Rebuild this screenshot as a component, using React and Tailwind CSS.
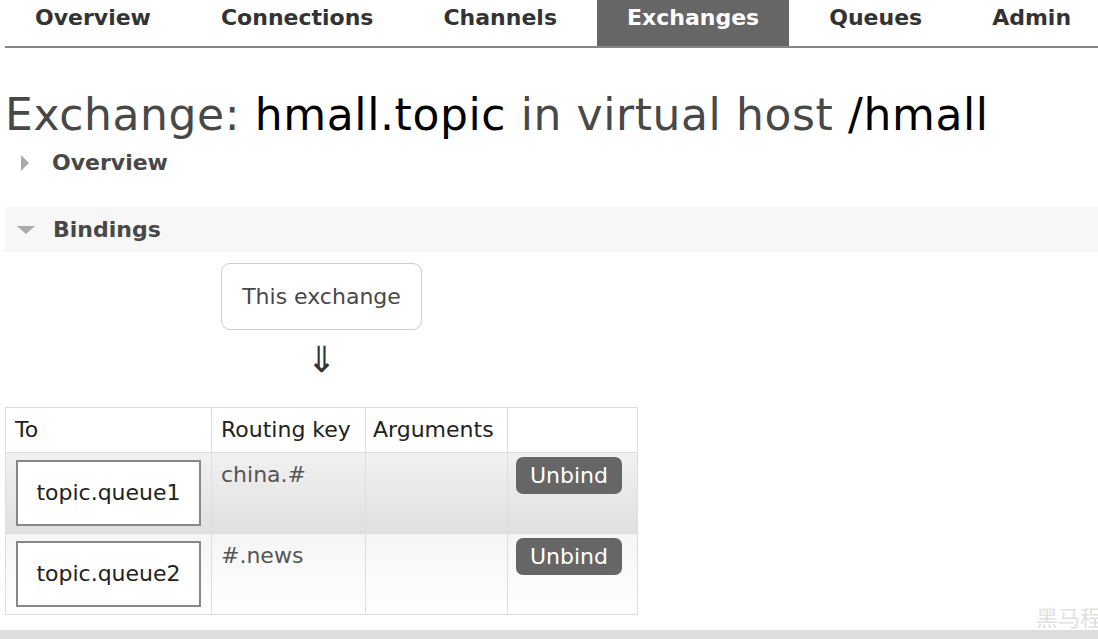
import React from "react";

const FONT = { fontFamily: '"DejaVu Sans", Verdana, "Noto Sans CJK SC", sans-serif' };

const tabs = ["Overview", "Connections", "Channels", "Exchanges", "Queues", "Admin"];

const bindings = [
  { to: "topic.queue1", key: "china.#", odd: true },
  { to: "topic.queue2", key: "#.news", odd: false },
];

function NavBar() {
  return (
    <div className="ml-[5px] flex h-[48px] gap-[10px] border-b-2 border-[#888]">
      {tabs.map((t) => (
        <div
          key={t}
          className={
            t === "Exchanges"
              ? "bg-[#666] px-[30px] pt-[5px] text-[22px] leading-[26px] font-bold text-white"
              : "px-[30px] pt-[5px] text-[22px] leading-[26px] font-bold text-[#333]"
          }
        >
          {t}
        </div>
      ))}
    </div>
  );
}

function Caret({ open }) {
  return open ? (
    <svg width="20" height="10" viewBox="0 0 20 10" className="mr-[17px]">
      <polygon points="1,1 19,1 10,9" fill="#aaa" />
    </svg>
  ) : (
    <svg width="10" height="18" viewBox="0 0 10 18" className="mr-[22px]">
      <polygon points="1,1 9,9 1,17" fill="#aaa" />
    </svg>
  );
}

export default function App() {
  return (
    <div className="relative h-[639px] w-[1098px] overflow-hidden bg-white" style={FONT}>
      <NavBar />

      <h1 className="ml-[5px] mt-[41px] text-[44px] leading-[52px] tracking-[0.6px] text-[#484848]">
        Exchange: <span className="text-black">hmall.topic</span> in virtual host{" "}
        <span className="text-black">/hmall</span>
      </h1>

      <div className="mt-[9px] flex h-[26px] items-center pl-[20px] text-[22px] leading-[26px] font-bold text-[#484848]">
        <Caret open={false} />
        Overview
      </div>

      <div className="ml-[5px] mt-[31px] flex h-[45px] items-center bg-[#f7f7f7] pl-[11px] text-[22px] font-bold text-[#484848]">
        <Caret open />
        Bindings
      </div>

      <div className="ml-[221px] mt-[11px] flex h-[67px] w-[201px] items-center justify-center rounded-[9px] border border-[#ccc] text-[22px] text-[#484848]">
        This exchange
      </div>
      <div className="ml-[221px] mt-[10px] h-[40px] w-[201px] text-center text-[36px] leading-[40px] text-[#333]">
        &#8659;
      </div>

      <table className="ml-[5px] mt-[27px] border-collapse text-[22px] leading-[26px] text-[#222]">
        <thead>
          <tr className="h-[45px] bg-white">
            <th className="w-[206px] border border-[#ddd] px-[9px] text-left font-normal">To</th>
            <th className="w-[154px] border border-[#ddd] px-[9px] text-left font-normal">Routing key</th>
            <th className="w-[142px] border border-[#ddd] px-[7px] text-left font-normal">Arguments</th>
            <th className="w-[130px] border border-[#ddd]"></th>
          </tr>
        </thead>
        <tbody>
          {bindings.map((b) => (
            <tr
              key={b.to}
              className={
                b.odd
                  ? "h-[81px] bg-gradient-to-b from-[#f1f1f1] to-[#e0e0e0]"
                  : "h-[81px] bg-gradient-to-b from-[#f5f5f5] to-white"
              }
            >
              <td className="border border-[#ddd] px-[10px] align-middle">
                <div className="flex h-[66px] w-[185px] items-center justify-center border-2 border-[#888] bg-white text-[#222]">
                  {b.to}
                </div>
              </td>
              <td className="border border-[#ddd] px-[9px] pt-[9px] align-top text-[#555]">{b.key}</td>
              <td className="border border-[#ddd]"></td>
              <td className="border border-[#ddd] px-[8px] pt-[4px] align-top">
                <div className="flex h-[37px] w-[106px] items-center justify-center rounded-[7px] bg-[#666] text-white">
                  Unbind
                </div>
              </td>
            </tr>
          ))}
        </tbody>
      </table>

      <div className="absolute right-[-4px] bottom-[7px] text-[22px] leading-[26px] text-[#e0e0e0]">黑马程</div>
      <div className="absolute bottom-0 left-0 h-[9px] w-full bg-[#ddd]"></div>
    </div>
  );
}
